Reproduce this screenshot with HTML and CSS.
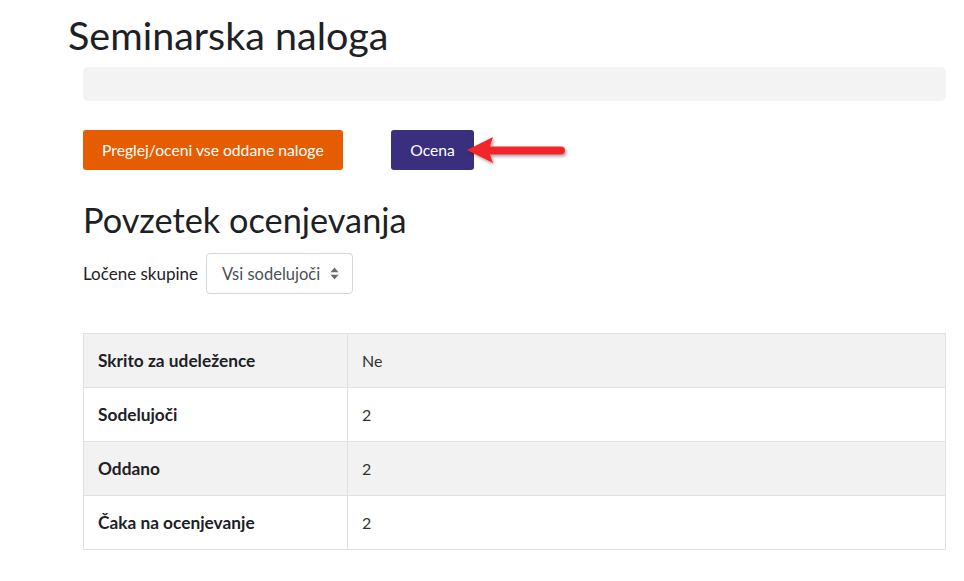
FILE: index.html
```html
<!DOCTYPE html>
<html lang="sl">
<head>
<meta charset="utf-8">
<title>Seminarska naloga</title>
<link rel="stylesheet" href="styles.css">
</head>
<body>
<div class="page">
  <h1 class="title">Seminarska naloga</h1>
  <div class="content">
    <div class="infobar"></div>
    <div class="actions">
      <button class="btn btn-orange">Preglej/oceni vse oddane naloge</button>
      <span class="grade-wrap">
        <button class="btn btn-purple">Ocena</button>
        <svg class="arrow" width="110" height="36" viewBox="0 0 110 36">
          <defs>
            <filter id="sh" x="-20%" y="-40%" width="140%" height="180%">
              <feDropShadow dx="1.5" dy="2" stdDeviation="1.5" flood-color="#000" flood-opacity="0.35"/>
            </filter>
          </defs>
          <g filter="url(#sh)">
            <path d="M2 18 L28 5 L25 14.5 L96 14.5 A4 4 0 0 1 96 22.5 L25 22.5 L28 31 Z" fill="#f2262b"/>
          </g>
        </svg>
      </span>
    </div>
    <h2 class="subtitle">Povzetek ocenjevanja</h2>
    <div class="groups">
      <label class="groups-label">Ločene skupine</label>
      <div class="select">
        <span>Vsi sodelujoči</span>
        <svg class="caret" width="9" height="13" viewBox="0 0 9 13"><path d="M4.5 0.5 L8.5 5.2 H0.5 Z M4.5 12.5 L8.5 7.8 H0.5 Z" fill="#6a6a6a"/></svg>
      </div>
    </div>
    <table class="summary">
      <tbody>
        <tr><th>Skrito za udeležence</th><td>Ne</td></tr>
        <tr><th>Sodelujoči</th><td>2</td></tr>
        <tr><th>Oddano</th><td>2</td></tr>
        <tr><th>Čaka na ocenjevanje</th><td>2</td></tr>
      </tbody>
    </table>
  </div>
</div>
</body>
</html>
```

FILE: styles.css
```css
* { box-sizing: border-box; }
html, body { margin: 0; padding: 0; background: #fff; }
body {
  font-family: "Source Sans Pro", Lato, "Liberation Sans", sans-serif;
  color: #1d2125;
  font-size: 16px;
}
.page { padding: 12px 18px 0 68px; }
.title {
  margin: 0;
  font-weight: 400;
  font-size: 39.5px;
  line-height: 46px;
}
.content { padding-left: 15px; }
.infobar {
  margin-top: 9px;
  height: 34px;
  background: #f3f3f3;
  border-radius: 5px;
}
.actions {
  display: flex;
  align-items: center;
  gap: 48px;
  margin-top: 29px;
}
.btn {
  font-family: inherit;
  font-size: 15.7px;
  border: none;
  border-radius: 3px;
  color: #fff;
  height: 40px;
  padding: 0 19px;
  cursor: pointer;
}
.btn-orange { background: #e65c00; }
.btn-purple { background: #3a2e7e; padding: 0 19.5px; }
.grade-wrap { position: relative; display: inline-block; }
.arrow { position: absolute; left: 74px; top: 2px; }
.subtitle {
  margin: 30px 0 0 0;
  font-weight: 400;
  font-size: 34.3px;
  line-height: 40px;
}
.groups {
  display: flex;
  align-items: center;
  gap: 8px;
  margin-top: 13px;
}
.groups-label { font-size: 17px; }
.select {
  display: flex;
  align-items: center;
  gap: 10px;
  height: 41px;
  padding: 0 13px 0 15px;
  border: 1px solid #d4d7db;
  border-radius: 4px;
  color: #495057;
  font-size: 16.5px;
}
.summary {
  margin-top: 39px;
  width: 863px;
  border-collapse: collapse;
}
.summary th, .summary td {
  border: 1px solid #dee2e6;
  height: 54px;
  padding: 0 14px;
  text-align: left;
  font-size: 16px;
}
.summary th { width: 264px; font-weight: 700; font-size: 17.3px; }
.summary td { color: #333; }
.summary tr:nth-child(odd) { background: #f2f2f2; }
```
